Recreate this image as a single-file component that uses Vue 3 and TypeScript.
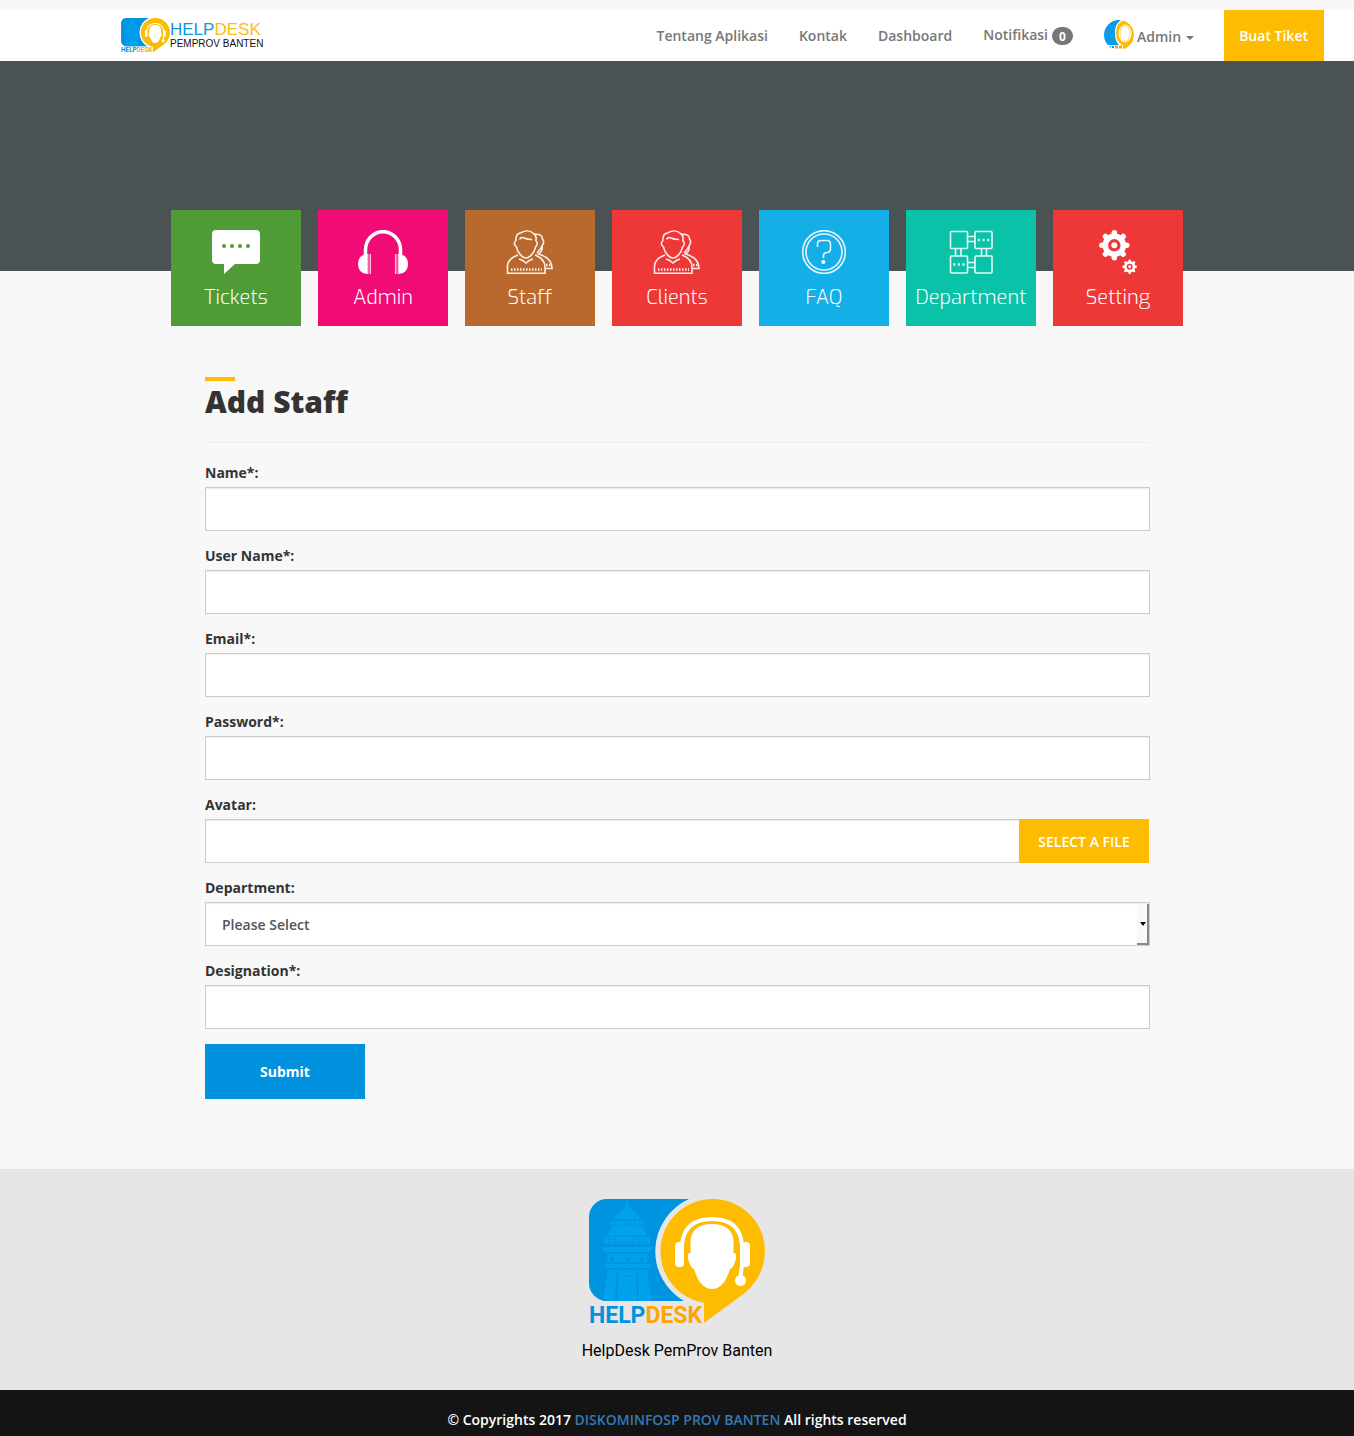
<script setup lang="ts">
import { ref } from 'vue'

interface Tile {
  label: string
  icon: string
  color: string
}

interface Field {
  id: string
  label: string
  type: 'text' | 'email' | 'password' | 'file' | 'select'
}

const links: string[] = ['Tentang Aplikasi', 'Kontak', 'Dashboard']

const tiles: Tile[] = [
  { label: 'Tickets', icon: 'tickets', color: '#4e9b37' },
  { label: 'Admin', icon: 'admin', color: '#f10c75' },
  { label: 'Staff', icon: 'people', color: '#b9682e' },
  { label: 'Clients', icon: 'people', color: '#ee3737' },
  { label: 'FAQ', icon: 'faq', color: '#15afe8' },
  { label: 'Department', icon: 'department', color: '#0ac2a8' },
  { label: 'Setting', icon: 'setting', color: '#ee3737' },
]

const fields: Field[] = [
  { id: 'name', label: 'Name*:', type: 'text' },
  { id: 'username', label: 'User Name*:', type: 'text' },
  { id: 'email', label: 'Email*:', type: 'email' },
  { id: 'password', label: 'Password*:', type: 'password' },
  { id: 'avatar', label: 'Avatar:', type: 'file' },
  { id: 'department', label: 'Department:', type: 'select' },
  { id: 'designation', label: 'Designation*:', type: 'text' },
]

const values = ref<Record<string, string>>({ department: '' })
const teeth = [0, 45, 90, 135, 180, 225, 270, 315]
</script>

<template>
  <div class="page">
    <svg class="defs" aria-hidden="true">
      <defs>
        <g id="brand-mark">
          <path fill="#0093df" d="M18 0H100A57.400 57.400 0 0 0 95 102H18A18 18 0 0 1 0 84V18A18 18 0 0 1 18 0Z" />
          <g fill="#00a2ee">
            <path d="M36 6l2-5 2 5v3q8 4 11 11H25q3-7 11-11Z" />
            <path d="M21 22h34v4H21zM23 27h30l5 10H18zM15 38h46v7H15zM12 48h52l-3 5H15zM18 55h40v8H18zM16 65h46v4H16z" />
            <path d="M19 71h9l-2 31H14zM30 71h17l1 31H28zM49 71h9l4 31H50z" />
          </g>
          <path stroke="#0093df" fill="none" d="M26 22v4M31 22v4M36 22v4M41 22v4M46 22v4M51 22v4M20 39v5M26 39v5M32 39v5M38 39v5M44 39v5M50 39v5M56 39v5" />
          <path fill="#0093df" d="M21 58h4v4h-4zM36 58h5v4h-5zM51 58h4v4h-4zM33 76h11v1H33z" />
          <circle cx="123.700" cy="52.300" r="52.300" fill="#fdbc00" />
          <path fill="#fdbc00" d="M115 100V124L157 93Z" />
          <path fill="#fff" d="M101.500 45Q101 25 123 25T144.500 45V54Q149 54 146 63Q144 69 141 70Q135 90 123 90T105 70Q102 69 100 63Q97 54 101.500 54Z" />
          <path fill="none" stroke="#fff" stroke-width="4" d="M93 46Q95 20 123 20T153 46V66L151 81" />
          <rect x="86" y="43" width="9" height="25" rx="4" fill="#fff" />
          <rect x="152" y="43" width="9" height="25" rx="4" fill="#fff" />
          <circle cx="151.500" cy="81.500" r="5.500" fill="#fff" />
          <text class="mark-text" x="0" y="124"><tspan fill="#0093df">HELP</tspan><tspan fill="#fda600">DESK</tspan></text>
        </g>
        <clipPath id="avatar-clip"><circle cx="15" cy="15" r="15" /></clipPath>
      </defs>
    </svg>

    <header class="navbar">
      <a class="brand" href="#" aria-label="Helpdesk Pemprov Banten">
        <svg viewBox="0 0 176 126" width="49" height="35" aria-hidden="true"><use href="#brand-mark" /></svg>
        <span class="brand-text">
          <span class="brand-name"><span class="blue">HELP</span><span class="amber">DESK</span></span>
          <span class="brand-sub">PEMPROV BANTEN</span>
        </span>
      </a>
      <nav class="menu">
        <a v-for="link in links" :key="link" href="#">{{ link }}</a>
        <a href="#" class="notice"><span class="notice-text">Notifikasi</span> <span class="badge">0</span></a>
        <a href="#" class="user">
          <svg width="30" height="30" viewBox="0 0 30 30" aria-hidden="true">
            <g clip-path="url(#avatar-clip)">
              <rect width="30" height="30" fill="#fff" />
              <path fill="#0a9ce6" d="M0 0H17Q10 5 11 14Q11 21 15 25H0Z" />
              <path fill="#fdbc00" d="M20 0Q30 2 30 14Q30 22 26 25L20 30V26Q12 23 12 13T20 0Z" />
              <ellipse cx="21" cy="13.500" rx="6.500" ry="9" fill="#fff" />
              <ellipse cx="21" cy="13.500" rx="5" ry="8" fill="none" stroke="#fdbc00" stroke-opacity=".6" />
              <path stroke="#0a9ce6" stroke-width="2" stroke-dasharray="2 1" d="M5 27h6" />
              <path stroke="#fda600" stroke-width="3" stroke-dasharray="3 1" d="M11 27h9" />
            </g>
          </svg>
          <span class="user-name">Admin</span>
          <i class="caret"></i>
        </a>
        <a href="#" class="create">Buat Tiket</a>
      </nav>
    </header>

    <div class="hero"></div>

    <nav class="tiles" aria-label="Modul">
      <a v-for="tile in tiles" :key="tile.label" href="#" class="tile" :style="{ background: tile.color }">
        <svg width="50" height="44" viewBox="0 0 50 44" aria-hidden="true">
          <g v-if="tile.icon === 'tickets'">
            <path fill="#fff" d="M5 0H45Q49 0 49 4V30Q49 34 45 34H24L13 44V34H5Q1 34 1 30V4Q1 0 5 0Z" />
            <circle v-for="x in [13, 21, 29, 37]" :key="x" :cx="x" cy="16" r="2" :fill="tile.color" />
          </g>
          <g v-else-if="tile.icon === 'admin'">
            <path fill="none" stroke="#fff" stroke-width="3.500" d="M7.500 26V20A17.500 18.300 0 0 1 42.500 20V26" />
            <path fill="#fff" d="M9 24V44Q0 43 0 34T9 24ZM41 24V44Q50 43 50 34T41 24Z" />
            <path fill="none" stroke="#fff" stroke-opacity=".75" stroke-width="1.500" d="M9.700 24V44M12.300 24V44M40.300 24V44M37.700 24V44" />
          </g>
          <g v-else-if="tile.icon === 'people'" class="line">
            <path d="M13 25Q2 29 2.500 37V43.300H40V37Q40 29 30 25" />
            <path d="M11.500 17C9 15 8.500 12.500 11 10.500C10.500 6 12 3.500 16 2.800C20 .3 25 .3 28.500 3.500C31 5 31.500 8 30.800 10.500C33 12.500 32.500 15 30.500 17C29.500 22 27 25 24 27Q21 29 18 27C15 25 12.500 22 11.500 17Z" />
            <path d="M14.500 9.500Q16 6.500 19 8T27 9.500M14 29Q18 30 21 33Q24 30 28 29M29 4.500Q37 3 37.500 9Q40 12 37 16Q38 21 33.500 24Q47 28 47 38.500H40M37 16Q35 20 32 23" />
            <path stroke-width="2.400" stroke-dasharray="1.500 1.500" d="M6 39.500H37M41 35H46" />
          </g>
          <g v-else-if="tile.icon === 'faq'" class="line">
            <circle cx="25" cy="22" r="21.300" />
            <circle cx="25" cy="22" r="18" />
            <path d="M18.500 17V14Q18.500 10.500 22 10.500H28Q31.500 10.500 31.500 14V19Q31.500 22 28 22.500Q24.500 22.500 24.500 26V28" />
            <circle cx="24.300" cy="32" r="1.300" fill="#fff" />
          </g>
          <g v-else-if="tile.icon === 'department'" class="line">
            <rect x="4.500" y="1.500" width="17" height="17" rx="1" />
            <rect x="29" y="1.500" width="17" height="17" rx="1" />
            <rect x="4.500" y="26" width="17" height="17" rx="1" />
            <rect x="29" y="26" width="17" height="17" rx="1" />
            <path d="M21.500 6.500H29M21.500 11.500H29M21.500 32.500H29M21.500 37.500H29M9.500 18.500V26M15 18.500V26M35.500 18.500V26M40.500 18.500V26" />
            <path stroke-width="2.400" stroke-dasharray="2 2.600" d="M32 10H44M7.300 34.500H19" />
          </g>
          <g v-else fill="#fff" stroke="#fff">
            <g v-for="gear in ['translate(21.300 15.300)', 'translate(36.700 36.700) scale(.48)']" :key="gear" :transform="gear">
              <circle r="9" fill="none" stroke-width="5.500" />
              <path v-for="a in teeth" :key="a" stroke-width="5.500" stroke-linecap="round" d="M0-10.500V-12.500" :transform="`rotate(${a})`" />
              <circle r="3" stroke="none" />
            </g>
          </g>
        </svg>
        <span>{{ tile.label }}</span>
      </a>
    </nav>

    <main class="content">
      <h1>Add Staff</h1>
      <form @submit.prevent>
        <div v-for="field in fields" :key="field.id" class="group">
          <label :for="field.id">{{ field.label }}</label>
          <div v-if="field.type === 'file'" class="file">
            <input :id="field.id" v-model="values[field.id]" class="control" type="text" readonly />
            <button type="button">SELECT A FILE</button>
          </div>
          <div v-else-if="field.type === 'select'" class="select">
            <select :id="field.id" v-model="values[field.id]" class="control">
              <option value="">Please Select</option>
            </select>
          </div>
          <input v-else :id="field.id" v-model="values[field.id]" class="control" :type="field.type" />
        </div>
        <button class="submit" type="submit">Submit</button>
      </form>
    </main>

    <footer>
      <div class="about">
        <svg viewBox="0 0 176 126" width="176" height="126" role="img" aria-label="Helpdesk"><use href="#brand-mark" /></svg>
        <p>HelpDesk PemProv Banten</p>
      </div>
      <div class="copyright">
        © Copyrights 2017 <a href="#">DISKOMINFOSP PROV BANTEN</a> All rights reserved
      </div>
    </footer>
  </div>
</template>

<style>
body {
  margin: 0;
  background: #f8f8f8;
}
</style>

<style scoped>
* {
  box-sizing: border-box;
}
.page {
  padding-top: 10px;
  font: 600 14px/20px 'Open Sans', sans-serif;
  color: #333;
}
a {
  text-decoration: none;
}
.defs {
  position: absolute;
  width: 0;
  height: 0;
}
.mark-text {
  font: 700 23px Roboto, sans-serif;
}
.navbar {
  display: flex;
  justify-content: space-between;
  height: 51px;
  padding: 0 30px 0 121px;
  background: #fff;
  border-radius: 4px;
}
.brand {
  display: flex;
  align-items: center;
}
.brand-text {
  display: flex;
  flex-direction: column;
  font-family: 'Liberation Sans', sans-serif;
  font-weight: 400;
}
.brand-name {
  font-size: 17px;
  line-height: 16px;
}
.brand-sub {
  font-size: 10px;
  line-height: 11px;
  color: #111;
}
.blue {
  color: #0a98e2;
}
.amber {
  color: #fdbc14;
}
.menu {
  display: flex;
}
.menu a {
  display: flex;
  align-items: center;
  padding: 0 16px 0 15px;
  color: #777;
}
.menu .notice {
  gap: 4px;
}
.notice-text {
  padding-bottom: 2px;
}
.badge {
  min-width: 21px;
  height: 18px;
  border-radius: 10px;
  background: #777;
  color: #fff;
  font-size: 12px;
  line-height: 19px;
  font-weight: 700;
  text-align: center;
}
.menu .user {
  gap: 3px;
  margin-right: 14px;
}
.user svg {
  margin-bottom: 1px;
}
.user-name {
  padding-top: 2px;
}
.caret {
  margin: 4px 0 0 2px;
  border: 4px solid transparent;
  border-top-color: #777;
  border-bottom: 0;
}
.menu .create {
  background: #fdbc00;
  color: #fff;
}
.hero {
  height: 210px;
  background: #4a5254;
}
.tiles {
  display: flex;
  justify-content: center;
  gap: 17px;
  margin-top: -61px;
}
.tile {
  display: flex;
  flex-direction: column;
  align-items: center;
  gap: 8px;
  width: 130px;
  padding: 20px 0 12px;
  color: #fff;
  font: 300 20px/32px 'Exo', Roboto, sans-serif;
}
.line {
  fill: none;
  stroke: #fff;
  stroke-width: 1.6px;
  stroke-opacity: 0.9;
}
.content {
  max-width: 946px;
  margin: 0 auto;
  padding: 51px 0 70px 1px;
}
h1 {
  margin: 0 0 20px;
  padding-bottom: 19px;
  border-bottom: 1px solid #eee;
  font-size: 30px;
  line-height: 42px;
  font-weight: 800;
}
h1::before {
  content: '';
  display: block;
  width: 30px;
  height: 4px;
  background: #fdbc00;
}
.group {
  margin-bottom: 15px;
}
label {
  display: block;
  margin-bottom: 4px;
  font-weight: 700;
}
.control {
  display: block;
  width: 100%;
  height: 44px;
  margin: 0;
  padding: 0 16px;
  border: 1px solid #ccc;
  border-radius: 0;
  background: #fff;
  box-shadow: inset 0 1px 1px rgba(0, 0, 0, 0.08);
  color: #555;
  font: inherit;
}
.file {
  display: flex;
  padding-right: 1px;
}
.file .control {
  flex: 1;
  border-right: 0;
}
.file button {
  width: 130px;
  padding: 2px 0 0;
  border: 0;
  background: #fdbc00;
  color: #fff;
  font: inherit;
}
.select {
  position: relative;
}
.select .control {
  padding-top: 2px;
  appearance: none;
}
.select::before {
  content: '';
  position: absolute;
  top: 2px;
  right: 1px;
  bottom: 1px;
  width: 10px;
  border-right: 2px solid #888;
  border-bottom: 2px solid #888;
  background: #f8f8f8;
  pointer-events: none;
}
.select::after {
  content: '';
  position: absolute;
  top: 20px;
  right: 4px;
  border: 3px solid transparent;
  border-top: 4px solid #000;
  border-bottom: 0;
  pointer-events: none;
}
.submit {
  display: block;
  width: 160px;
  height: 55px;
  border: 0;
  background: #0091df;
  color: #fff;
  font: inherit;
  font-weight: 700;
}
.about {
  display: flex;
  flex-direction: column;
  align-items: center;
  padding: 30px 0 29px;
  background: #e6e6e6;
}
.about p {
  margin: 16px 0 0;
  color: #000;
  font: 400 16px/20px Roboto, sans-serif;
}
.copyright {
  padding: 20px 0 6px;
  background: #141414;
  color: #fff;
  text-align: center;
}
.copyright a {
  color: #337ab7;
}
</style>
